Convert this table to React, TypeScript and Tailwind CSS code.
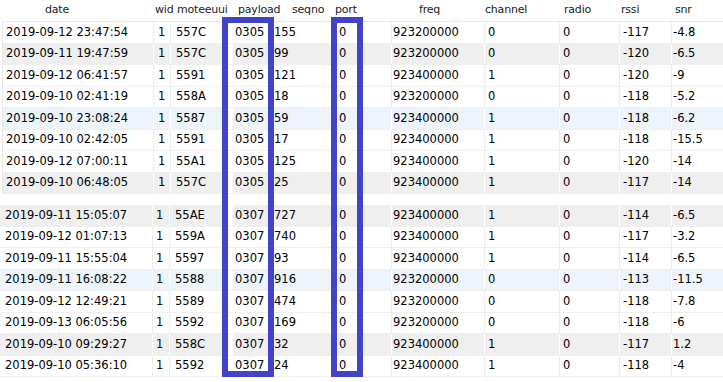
import React from "react";

type Row = { d: string; w: string; m: string; p: string; s: string; port: string; f: string; c: string; r: string; rssi: string; snr: string; bg: "w" | "g" | "b" };

const top: Row[] = [
  { d: "2019-09-12 23:47:54", w: "1", m: "557C", p: "0305", s: "155", port: "0", f: "923200000", c: "0", r: "0", rssi: "-117", snr: "-4.8", bg: "w" },
  { d: "2019-09-11 19:47:59", w: "1", m: "557C", p: "0305", s: "99", port: "0", f: "923200000", c: "0", r: "0", rssi: "-120", snr: "-6.5", bg: "g" },
  { d: "2019-09-12 06:41:57", w: "1", m: "5591", p: "0305", s: "121", port: "0", f: "923400000", c: "1", r: "0", rssi: "-120", snr: "-9", bg: "w" },
  { d: "2019-09-10 02:41:19", w: "1", m: "558A", p: "0305", s: "18", port: "0", f: "923200000", c: "0", r: "0", rssi: "-118", snr: "-5.2", bg: "w" },
  { d: "2019-09-10 23:08:24", w: "1", m: "5587", p: "0305", s: "59", port: "0", f: "923400000", c: "1", r: "0", rssi: "-118", snr: "-6.2", bg: "b" },
  { d: "2019-09-10 02:42:05", w: "1", m: "5591", p: "0305", s: "17", port: "0", f: "923400000", c: "1", r: "0", rssi: "-118", snr: "-15.5", bg: "w" },
  { d: "2019-09-12 07:00:11", w: "1", m: "55A1", p: "0305", s: "125", port: "0", f: "923400000", c: "1", r: "0", rssi: "-120", snr: "-14", bg: "w" },
  { d: "2019-09-10 06:48:05", w: "1", m: "557C", p: "0305", s: "25", port: "0", f: "923400000", c: "1", r: "0", rssi: "-117", snr: "-14", bg: "g" },
];

const bottom: Row[] = [
  { d: "2019-09-11 15:05:07", w: "1", m: "55AE", p: "0307", s: "727", port: "0", f: "923400000", c: "1", r: "0", rssi: "-114", snr: "-6.5", bg: "g" },
  { d: "2019-09-12 01:07:13", w: "1", m: "559A", p: "0307", s: "740", port: "0", f: "923400000", c: "1", r: "0", rssi: "-117", snr: "-3.2", bg: "w" },
  { d: "2019-09-11 15:55:04", w: "1", m: "5597", p: "0307", s: "93", port: "0", f: "923400000", c: "1", r: "0", rssi: "-114", snr: "-6.5", bg: "w" },
  { d: "2019-09-11 16:08:22", w: "1", m: "5588", p: "0307", s: "916", port: "0", f: "923200000", c: "0", r: "0", rssi: "-113", snr: "-11.5", bg: "b" },
  { d: "2019-09-12 12:49:21", w: "1", m: "5589", p: "0307", s: "474", port: "0", f: "923200000", c: "0", r: "0", rssi: "-118", snr: "-7.8", bg: "w" },
  { d: "2019-09-13 06:05:56", w: "1", m: "5592", p: "0307", s: "169", port: "0", f: "923200000", c: "0", r: "0", rssi: "-118", snr: "-6", bg: "w" },
  { d: "2019-09-10 09:29:27", w: "1", m: "558C", p: "0307", s: "32", port: "0", f: "923400000", c: "1", r: "0", rssi: "-117", snr: "1.2", bg: "g" },
  { d: "2019-09-10 05:36:10", w: "1", m: "5592", p: "0307", s: "24", port: "0", f: "923400000", c: "1", r: "0", rssi: "-118", snr: "-4", bg: "w" },
];

function Cell({ w, pl, g, last, payload, children }: { w: string; pl: string; g: boolean; last?: boolean; payload?: boolean; children: React.ReactNode }) {
  const border = last ? "" : g ? "border-r border-white" : "border-r border-[#ececec]";
  const pay = payload ? "border-l-[5px] border-l-white" : "";
  return <div className={`${w} ${pl} ${border} ${pay} h-full flex items-center shrink-0 whitespace-nowrap`}>{children}</div>;
}

function DataRow({ r, first }: { r: Row; first: boolean }) {
  const g = r.bg !== "w";
  const bg = r.bg === "g" ? "bg-[#efefef]" : r.bg === "b" ? "bg-[#edf4fc]" : "bg-white";
  return (
    <div className={`flex h-[21.5px] border-b border-[#efefef] ${bg}`}>
      {first ? (
        <>
          <Cell w="w-[151px]" pl="pl-[3px]" g={g}>{r.d}</Cell>
          <Cell w="w-[17px]" pl="pl-[4px]" g={g}>{r.w}</Cell>
          <Cell w="w-[57px]" pl="pl-[5px]" g={g}>{r.m}</Cell>
        </>
      ) : (
        <>
          <Cell w="w-[153px]" pl="pl-[5px]" g={g}>{r.d}</Cell>
          <Cell w="w-[17px]" pl="pl-[3px]" g={g}>{r.w}</Cell>
          <Cell w="w-[58px]" pl="pl-[5px]" g={g}>{r.m}</Cell>
        </>
      )}
      <Cell w="w-[42px]" pl="pl-[2px]" g={g} payload>{r.p}</Cell>
      <Cell w="w-[63px]" pl="pl-[4px]" g={g}>{r.s}</Cell>
      <Cell w="w-[59px]" pl="pl-[6px]" g={g}>{r.port}</Cell>
      <Cell w="w-[93px]" pl="pl-[1px]" g={g}>{r.f}</Cell>
      <Cell w="w-[75px]" pl="pl-[3px]" g={g}>{r.c}</Cell>
      <Cell w="w-[60px]" pl="pl-[3px]" g={g}>{r.r}</Cell>
      <Cell w="w-[52px]" pl="pl-[3px]" g={g}>{r.rssi}</Cell>
      <Cell w="w-[51px]" pl="pl-[1px]" g={g} last>{r.snr}</Cell>
    </div>
  );
}

export default function App() {
  return (
    <div
      className="relative w-[723px] h-[382px] overflow-hidden bg-white text-[11.5px] text-black"
      style={{ fontFamily: '"DejaVu Sans", Verdana, sans-serif' }}
    >
      <div className="flex h-[21px] items-center pl-[45px] text-[11px] tracking-[-0.2px] text-[#1a1a1a]">
        <span className="w-[110px] shrink-0">date</span>
        <span className="w-[22px] shrink-0">wid</span>
        <span className="w-[61px] shrink-0">moteeuui</span>
        <span className="w-[54px] shrink-0">payload</span>
        <span className="w-[43px] shrink-0">seqno</span>
        <span className="w-[84px] shrink-0">port</span>
        <span className="w-[66px] shrink-0">freq</span>
        <span className="w-[79px] shrink-0">channel</span>
        <span className="w-[57px] shrink-0">radio</span>
        <span className="w-[54px] shrink-0">rssi</span>
        <span className="shrink-0">snr</span>
      </div>
      <div className="ml-[2px] border-l border-t border-[#e6e6e6]">
        {top.map((r, i) => (
          <DataRow key={i} r={r} first />
        ))}
      </div>
      <div className="mt-[11px]">
        {bottom.map((r, i) => (
          <DataRow key={i} r={r} first={false} />
        ))}
      </div>
      <div className="absolute left-[222px] top-[17px] w-[52px] h-[360px] border-[6px] border-[#4343c8]" />
      <div className="absolute left-[331px] top-[17px] w-[32px] h-[360px] border-[6px] border-[#4343c8]" />
    </div>
  );
}
